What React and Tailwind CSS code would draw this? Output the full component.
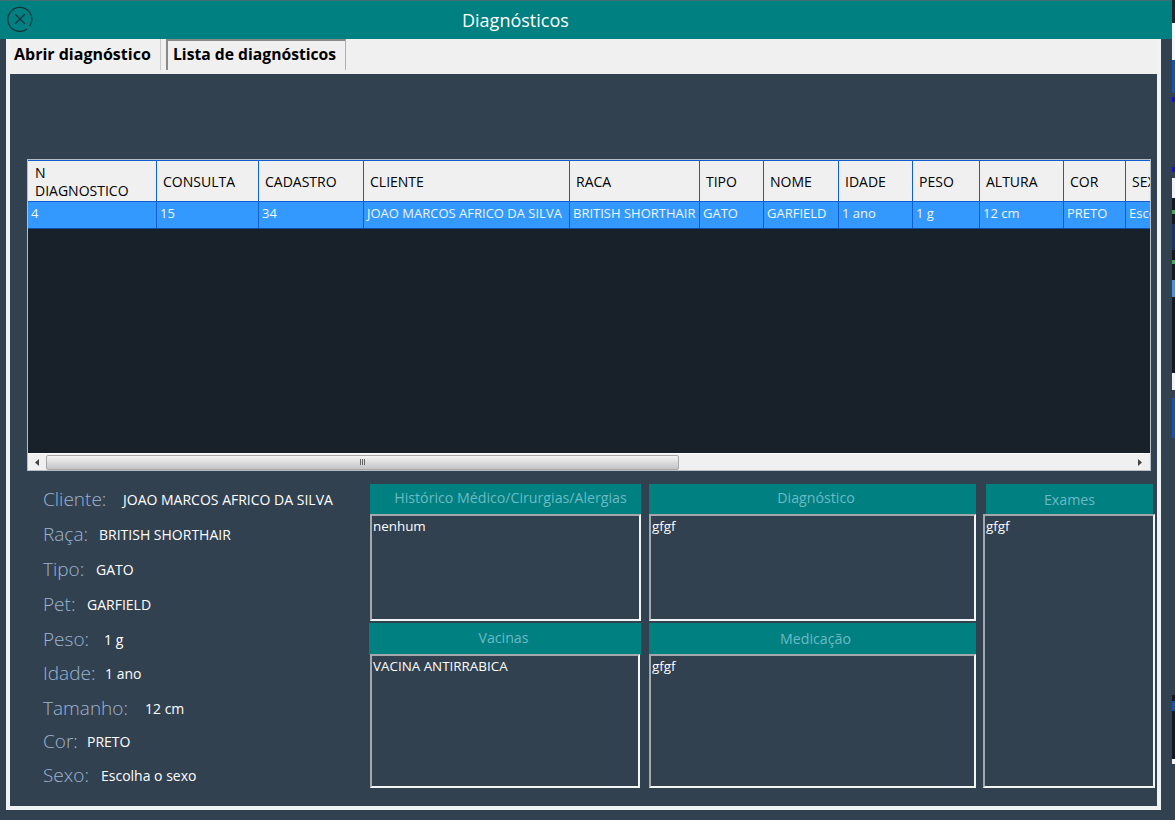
import React from 'react';

const font = "font-['Open_Sans','Noto_Sans',sans-serif]";

const columns = [
  { title: 'N DIAGNOSTICO', value: '4', width: 'w-[129px]', wrap: true },
  { title: 'CONSULTA', value: '15', width: 'w-[102px]' },
  { title: 'CADASTRO', value: '34', width: 'w-[105px]' },
  { title: 'CLIENTE', value: 'JOAO MARCOS AFRICO DA SILVA', width: 'w-[206px]' },
  { title: 'RACA', value: 'BRITISH SHORTHAIR', width: 'w-[130px]' },
  { title: 'TIPO', value: 'GATO', width: 'w-[64px]' },
  { title: 'NOME', value: 'GARFIELD', width: 'w-[75px]' },
  { title: 'IDADE', value: '1 ano', width: 'w-[74px]' },
  { title: 'PESO', value: '1 g', width: 'w-[67px]' },
  { title: 'ALTURA', value: '12 cm', width: 'w-[84px]' },
  { title: 'COR', value: 'PRETO', width: 'w-[62px]' },
  { title: 'SEXO', value: 'Escolha o sexo', width: 'w-[100px]' },
];

const details = [
  { label: 'Cliente:', value: 'JOAO MARCOS AFRICO DA SILVA', width: 'w-[80px]', height: 'h-[35px]' },
  { label: 'Raça:', value: 'BRITISH SHORTHAIR', width: 'w-[56px]', height: 'h-[35px]' },
  { label: 'Tipo:', value: 'GATO', width: 'w-[53px]', height: 'h-[35px]' },
  { label: 'Pet:', value: 'GARFIELD', width: 'w-[44px]', height: 'h-[35px]' },
  { label: 'Peso:', value: '1 g', width: 'w-[61px]', height: 'h-[34px]' },
  { label: 'Idade:', value: '1 ano', width: 'w-[62px]', height: 'h-[35px]' },
  { label: 'Tamanho:', value: '12 cm', width: 'w-[102px]', height: 'h-[34px]' },
  { label: 'Cor:', value: 'PRETO', width: 'w-[44px]', height: 'h-[33px]' },
  { label: 'Sexo:', value: 'Escolha o sexo', width: 'w-[58px]', height: 'h-[35px]' },
];

const CloseIcon = () => (
  <svg width="26" height="26" viewBox="0 0 26 26" fill="none" stroke="#12343a" strokeWidth="1.2">
    <path d="M22.5 20.5A12 12 0 1 0 20 23" />
    <path d="M8 8l10 10M18 8L8 18" />
  </svg>
);

const SectionHeader = ({ children, className }) => (
  <div className={`flex items-center justify-center bg-[#008080] text-[14.2px] text-[#6cbac6] ${className}`}>
    {children}
  </div>
);

const TextBox = ({ children, className }) => (
  <div className={`border-2 border-t-[#a3a8ad] border-l-[#a3a8ad] border-r-[#f2f5f5] border-b-[#f2f5f5] px-[1px] text-[13.4px] leading-[20px] text-white ${className}`}>
    {children}
  </div>
);

const ScrollBar = () => (
  <div className="flex h-[17px] items-center border-t border-white bg-[#f0f0f0]">
    <div className="flex w-[18px] justify-center">
      <svg width="6" height="7" viewBox="0 0 6 7"><path d="M5 0v7L1 3.5z" fill="#444" /></svg>
    </div>
    <div className="flex h-[15px] w-[633px] items-center justify-center rounded-[2px] border border-[#a8a8a8] bg-gradient-to-b from-[#f4f4f4] via-[#dcdcdc] to-[#c4c4c4]">
      <div className="flex gap-[1px]">
        <div className="h-[6px] w-[1px] bg-[#666]" />
        <div className="h-[6px] w-[1px] bg-[#666]" />
        <div className="h-[6px] w-[1px] bg-[#666]" />
      </div>
    </div>
    <div className="flex-1" />
    <div className="flex w-[21px] justify-center">
      <svg width="6" height="7" viewBox="0 0 6 7"><path d="M1 0v7l4-3.5z" fill="#444" /></svg>
    </div>
  </div>
);

const DataTable = () => (
  <div className="ml-[17px] flex h-[312px] w-[1124px] flex-col border border-[#b4bcc6] bg-[#18202a]">
    <div className="flex-1 overflow-hidden">
      <div className="flex h-[42px] w-[1300px] border-y border-[#0f5fce] bg-[#f0f0f0] text-[14px] leading-[18px] text-black">
        {columns.map((col) => (
          <div key={col.title} className={`flex shrink-0 items-center border-r border-[#0f5fce] pl-[6px] pt-[1px] ${col.width}`}>
            <span className={col.wrap ? 'w-[100px] pl-[1px]' : 'whitespace-nowrap'}>{col.title}</span>
          </div>
        ))}
      </div>
      <div className="flex h-[27px] w-[1300px] border-b border-[#0f4fa8] bg-[#3399ff] text-[13px] text-[#eef6ff]">
        {columns.map((col) => (
          <div key={col.title} className={`flex shrink-0 items-center overflow-hidden whitespace-nowrap border-r border-[#0f5fce] pb-[2px] pl-[3px] ${col.width}`}>
            {col.value}
          </div>
        ))}
      </div>
    </div>
    <ScrollBar />
  </div>
);

const StripSegment = ({ className }) => <div className={`w-[3px] ${className}`} />;

export default function App() {
  return (
    <div className={`flex h-[820px] w-[1175px] overflow-hidden bg-[#324150] ${font}`}>
      <div className="w-[1172px] shrink-0">
        <div className="flex h-[39px] items-center border-t border-[#3c6f70] bg-[#008080] pb-[3px] pl-[7px]">
          <CloseIcon />
          <h1 className="ml-[429px] pt-[4px] text-[18px] font-normal text-white">Diagnósticos</h1>
        </div>

        <div className="ml-[6px] h-[771px] w-[1155px] border-x-4 border-b-4 border-[#f0f3f3] bg-[#324150]">
          <div className="flex h-[35px] bg-[#f0f0f0] text-[16px] font-bold text-black">
            <div className="flex h-[31px] w-[151px] items-center border-r border-[#c8c8c8] pb-[2px] pl-[4px]">
              Abrir diagnóstico
            </div>
            <div className="ml-[5px] flex h-[31px] w-[180px] items-center border-l-2 border-r border-t-2 border-l-[#8a8a8a] border-r-[#b0b0b0] border-t-[#8a8a8a] pb-[2px] pl-[5px] text-[15.7px]">
              Lista de diagnósticos
            </div>
          </div>

          <div className="pt-[85px]">
            <DataTable />

            <div className="mt-[13px] flex">
              <div className="-mt-[2px] ml-[33px] w-[327px] text-white">
                {details.map((row) => (
                  <div key={row.label} className={`flex items-center ${row.height}`}>
                    <span className={`shrink-0 text-[19px] font-light text-[#9db4d0] ${row.width}`}>{row.label}</span>
                    <span className="whitespace-nowrap text-[14px]">{row.value}</span>
                  </div>
                ))}
              </div>

              <div className="w-[271px]">
                <SectionHeader className="h-[30px] pb-[3px] pl-[10px]">Histórico Médico/Cirurgias/Alergias</SectionHeader>
                <TextBox className="h-[107px]">nenhum</TextBox>
                <SectionHeader className="-ml-[1px] mt-[2px] h-[32px] pb-[3px] pr-[3px]">Vacinas</SectionHeader>
                <TextBox className="-mt-[1px] h-[134px] w-[270px]">VACINA ANTIRRABICA</TextBox>
              </div>

              <div className="ml-[8px] w-[327px]">
                <SectionHeader className="h-[30px] pb-[3px] pl-[7px]">Diagnóstico</SectionHeader>
                <TextBox className="h-[107px]">gfgf</TextBox>
                <SectionHeader className="mt-[2px] h-[32px] pb-[1px] pl-[6px]">Medicação</SectionHeader>
                <TextBox className="-mt-[1px] h-[134px]">gfgf</TextBox>
              </div>

              <div className="ml-[7px] w-[172px]">
                <SectionHeader className="ml-[3px] h-[30px] w-[167px] pt-[1px]">Exames</SectionHeader>
                <TextBox className="h-[274px]">gfgf</TextBox>
              </div>
            </div>
          </div>
        </div>
      </div>

      <div className="flex w-[3px] flex-col">
        <StripSegment className="h-[23px] bg-[#20262c]" />
        <StripSegment className="h-[37px] bg-[#f6f6f2]" />
        <StripSegment className="h-[33px] bg-[#1553b8]" />
        <StripSegment className="h-[4px] bg-[#324150]" />
        <StripSegment className="h-[5px] bg-[#1212d8]" />
        <StripSegment className="h-[65px] bg-[#324150]" />
        <StripSegment className="h-[5px] bg-[#1212d8]" />
        <StripSegment className="h-[6px] bg-[#324150]" />
        <StripSegment className="h-[20px] bg-[#f2f2f2]" />
        <StripSegment className="h-[12px] bg-[#141a22]" />
        <StripSegment className="h-[4px] bg-[#3fae4a]" />
        <StripSegment className="h-[10px] bg-[#141a22]" />
        <StripSegment className="h-[26px] bg-[#16337a]" />
        <StripSegment className="h-[10px] bg-[#141a22]" />
        <StripSegment className="h-[4px] bg-[#3fae4a]" />
        <StripSegment className="h-[16px] bg-[#141a22]" />
        <StripSegment className="h-[17px] bg-[#4a90e2]" />
        <StripSegment className="h-[76px] bg-[#141a22]" />
        <StripSegment className="h-[17px] bg-[#f2f2f2]" />
        <StripSegment className="h-[8px] bg-[#324150]" />
        <StripSegment className="h-[40px] bg-[#1553b8]" />
        <StripSegment className="h-[257px] bg-[#324150]" />
        <StripSegment className="h-[6px] bg-[#141a22]" />
        <StripSegment className="h-[10px] bg-[#1553b8]" />
        <StripSegment className="h-[48px] bg-[#141a22]" />
        <StripSegment className="h-[5px] bg-[#f2f2f2]" />
      </div>
    </div>
  );
}
